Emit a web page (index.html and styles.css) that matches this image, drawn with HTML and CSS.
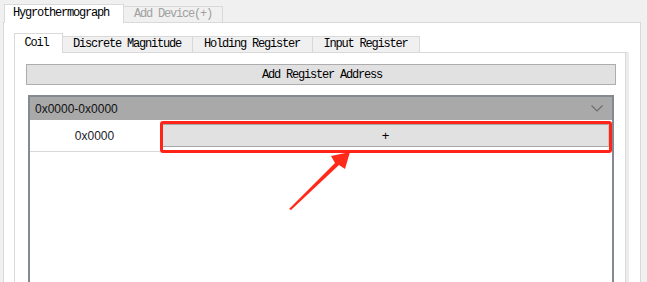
FILE: index.html
```html
<!DOCTYPE html>
<html lang="en">
<head>
    <meta charset="UTF-8">
    <meta name="viewport" content="width=device-width, initial-scale=1.0">
    <title>Hygrothermograph - Coil</title>
    <link rel="stylesheet" href="styles.css">
</head>
<body>
    <div class="window">
        <!-- device tabs -->
        <div class="device-tabs">
            <div class="tab active">Hygrothermograph</div>
            <div class="tab disabled">Add Device(+)</div>
        </div>

        <div class="device-panel">
            <!-- register type tabs -->
            <div class="reg-tabs">
                <div class="reg-tab active">Coil</div>
                <div class="reg-tab">Discrete Magnitude</div>
                <div class="reg-tab">Holding Register</div>
                <div class="reg-tab">Input Register</div>
            </div>

            <div class="reg-panel">
                <button class="add-btn">Add Register Address</button>

                <div class="group">
                    <div class="group-header">
                        <span>0x0000-0x0000</span>
                        <svg class="chevron" width="12" height="7" viewBox="0 0 12 7">
                            <path d="M0.5 0.5 L6 6 L11.5 0.5" fill="none" stroke="#6d6d6d" stroke-width="1.2"/>
                        </svg>
                    </div>
                    <div class="group-body">
                        <div class="reg-row">
                            <div class="addr">0x0000</div>
                            <div class="value">
                                <button class="plus-btn">+</button>
                            </div>
                            <div class="highlight"></div>
                        </div>
                    </div>
                </div>
            </div>
        </div>

        <!-- annotation arrow -->
        <svg class="arrow" width="647" height="282" viewBox="0 0 647 282">
            <path d="M289 209 L335 163 L331 156 L350 152 L345 169 L339 165 L291 210 Z" fill="#ff2a1a"/>
        </svg>
    </div>
</body>
</html>
```

FILE: styles.css
```css
* {
    margin: 0;
    padding: 0;
    box-sizing: border-box;
}

body {
    background: #f0f0f0;
    width: 647px;
    height: 282px;
    overflow: hidden;
    font-family: 'Liberation Mono', monospace;
    font-size: 12px;
    color: #000;
}

.window {
    position: relative;
    height: 282px;
    display: flex;
    flex-direction: column;
}

.device-tabs {
    display: flex;
    align-items: flex-end;
    height: 22px;
    padding-left: 4px;
}

.tab {
    height: 16px;
    line-height: 15px;
    border: 1px solid #d9d9d9;
    border-bottom: none;
    letter-spacing: -1.2px;
    text-align: center;
}

.tab.active {
    width: 120px;
    height: 19px;
    line-height: 17px;
    background: #fff;
    margin-bottom: -1px;
    position: relative;
    padding-right: 6px;
}

.tab.disabled {
    width: 99px;
    color: #a0a0a0;
    border-left: none;
    background: #f0f0f0;
}

.device-panel {
    flex: 1;
    margin-left: 3px;
    width: 638px;
    background: #fff;
    border: 1px solid #d9d9d9;
    border-bottom: none;
    padding: 10px 11px 0 10px;
    display: flex;
    flex-direction: column;
}

.reg-tabs {
    display: flex;
    align-items: flex-end;
    height: 19px;
}

.reg-tab {
    height: 16px;
    line-height: 15px;
    border: 1px solid #d9d9d9;
    border-bottom: none;
    border-left: none;
    background: #f0f0f0;
    letter-spacing: -1.2px;
    text-align: center;
    padding: 0 9px 0 8px;
}

.reg-tab.active {
    width: 49px;
    height: 20px;
    line-height: 18px;
    background: #fff;
    border-left: 1px solid #d9d9d9;
    margin-bottom: -1px;
    position: relative;
    padding-right: 12px;
}

.reg-tab:nth-child(2) { width: 130px; }
.reg-tab:nth-child(3) { width: 120px; }
.reg-tab:nth-child(4) { width: 107px; }

.reg-panel {
    flex: 1;
    width: 615px;
    border: 1px solid #d9d9d9;
    border-bottom: none;
    border-right: 3px solid #ececec;
    box-shadow: inset -1px 0 0 #d9d9d9;
    padding: 11px 11px 0 11px;
    display: flex;
    flex-direction: column;
}

.add-btn {
    width: 590px;
    height: 21px;
    background: #e1e1e1;
    border: 1px solid #adadad;
    font-family: 'Liberation Mono', monospace;
    font-size: 12px;
    letter-spacing: -1.2px;
    color: #000;
    padding-left: 2px;
}

.group {
    flex: 1;
    margin: 10px 0 0 2px;
    width: 586px;
    border: 2px solid #858991;
    border-bottom: none;
    display: flex;
    flex-direction: column;
}

.group-header {
    height: 23px;
    background: #a9a9a9;
    display: flex;
    align-items: center;
    justify-content: space-between;
    padding: 0 9px 0 5px;
    font-family: 'Liberation Sans', Arial, sans-serif;
    font-size: 12px;
    color: #111;
}

.chevron {
    display: block;
}

.group-body {
    flex: 1;
    background: #fff;
}

.reg-row {
    position: relative;
    display: flex;
    height: 32px;
}

.addr {
    width: 130px;
    border-bottom: 1px solid #d8d8d8;
    display: flex;
    align-items: center;
    justify-content: center;
    padding-right: 1px;
    font-family: 'Liberation Sans', Arial, sans-serif;
    font-size: 12px;
    color: #1a1a2a;
}

.value {
    flex: 1;
    padding: 4px 3px 4px 2px;
}

.plus-btn {
    width: 100%;
    height: 23px;
    background: #e1e1e1;
    border: 1px solid #a6a6a6;
    border-left-color: #c8c8c8;
    border-right-color: #c8c8c8;
    font-family: 'Liberation Sans', Arial, sans-serif;
    font-size: 13px;
    color: #000;
}

.highlight {
    position: absolute;
    left: 130px;
    top: 1px;
    right: 0;
    bottom: -1px;
    border: 3px solid #ff2418;
    border-radius: 3px;
}

.arrow {
    position: absolute;
    left: 0;
    top: 0;
    pointer-events: none;
}
```
